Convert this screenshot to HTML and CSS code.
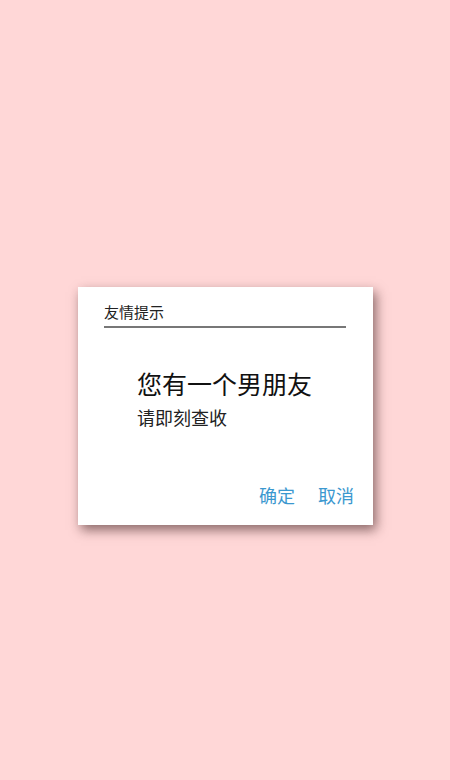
FILE: index.html
```html
<!DOCTYPE html>
<html>
<head>
  <meta charset="UTF-8">
  <title>友情提示</title>
  <meta name="viewport" content="width=device-width, initial-scale=1.0">
  <link rel="stylesheet" href="styles.css">
</head>
<body>
  <!-- Dialog -->
  <div class="dialog">
    <div class="dialog-title">友情提示</div>
    <div class="dialog-body">
      <div class="main-text">您有一个男朋友</div>
      <div class="sub-text">请即刻查收</div>
    </div>
    <div class="dialog-actions">
      <a href="#">确定</a>
      <a href="#">取消</a>
    </div>
  </div>
</body>
</html>
```

FILE: styles.css
```css
html, body {
  height: 100%;
}

body {
  margin: 0;
  background-color: #ffd7d7;
  font-family: "Noto Sans CJK SC", "Noto Sans", sans-serif;
  display: flex;
  flex-direction: column;
  align-items: center;
}

/*Dialog*/
.dialog {
  width: 295px;
  height: 238px;
  margin-top: 287px;
  margin-left: 1px;
  box-sizing: border-box;
  background: white;
  padding: 14px 19px 0 26px;
  box-shadow: 3px 5px 11px rgba(60, 30, 30, 0.6);
  display: flex;
  flex-direction: column;
}

.dialog-title {
  font-size: 15px;
  line-height: 22px;
  color: #222;
  width: 242px;
  padding-bottom: 3px;
  border-bottom: 2px solid #777;
}

.dialog-body {
  padding: 40px 0 0 33px;
}

.main-text {
  font-size: 25px;
  line-height: 30px;
  color: #111;
}

.sub-text {
  font-size: 18px;
  line-height: 26px;
  margin-top: 6px;
  color: #222;
}

.dialog-actions {
  margin-top: auto;
  margin-bottom: 18px;
  display: flex;
  justify-content: flex-end;
  gap: 23px;
}

.dialog-actions a {
  color: #3b98cf;
  text-decoration: none;
  font-size: 18px;
  line-height: 24px;
}
```
